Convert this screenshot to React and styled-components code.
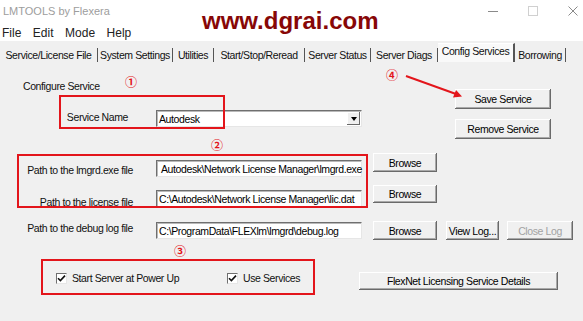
import React from 'react'
import styled, { createGlobalStyle } from 'styled-components'

const UI_FONT = '"Liberation Sans", Arial, sans-serif'
const RED = '#e3151b'

const GlobalStyle = createGlobalStyle`
  html, body {
    margin: 0;
    padding: 0;
    background: #f0f0f0;
  }
  body {
    font-family: ${UI_FONT};
  }
  * {
    box-sizing: border-box;
  }
`

const Window = styled.div`
  position: relative;
  width: 583px;
  height: 321px;
  overflow: hidden;
  background: #f0f0f0;
  display: flex;
  flex-direction: column;
  font-family: ${UI_FONT};
  font-size: 10.5px;
  letter-spacing: -0.4px;
  color: #111;
`

const TitleBar = styled.div`
  height: 22px;
  flex: none;
  background: #fff;
  display: flex;
  align-items: center;
  padding: 0 5px 0 3px;
`

const TitleText = styled.div`
  font-size: 11px;
  letter-spacing: 0;
  color: #9d9d9d;
`

const Controls = styled.div`
  margin-left: auto;
  display: flex;
  align-items: center;
  gap: 30px;
`

const Watermark = styled.div`
  position: absolute;
  left: 202px;
  top: 9px;
  font-family: "Liberation Sans", Arial, sans-serif;
  font-weight: bold;
  font-size: 24px;
  line-height: 24px;
  letter-spacing: 0;
  color: #870707;
`

const MenuBar = styled.div`
  height: 19px;
  flex: none;
  background: #fff;
  display: flex;
  align-items: center;
  gap: 11.5px;
  padding: 3px 0 0 2px;
  font-size: 12px;
  letter-spacing: 0;
  color: #222;
`

const TabStrip = styled.div`
  height: 21px;
  flex: none;
  display: flex;
  align-items: flex-end;
`

const Tab = styled.div`
  width: ${p => p.$w}px;
  height: ${p => (p.$active ? 19 : 14)}px;
  display: flex;
  align-items: center;
  justify-content: center;
  padding-bottom: ${p => (p.$active ? 4 : 0)}px;
  white-space: nowrap;
  background: ${p => (p.$active ? '#f9f9f9' : 'transparent')};
  border-right: ${p => (p.$active ? 2 : 1)}px solid #555;
  border-top: ${p => (p.$active ? '1px solid #fff' : 'none')};
`

const Panel = styled.div`
  display: flex;
  flex-direction: column;
`

const TopSection = styled.div`
  height: 91px;
  display: flex;
`

const TopLeft = styled.div`
  width: 455px;
  display: flex;
  flex-direction: column;
  padding-top: 18px;
`

const SectionTitle = styled.div`
  padding-left: 23px;
  line-height: 12px;
  height: 12px;
  margin-bottom: 18px;
`

const SideButtons = styled.div`
  display: flex;
  flex-direction: column;
  gap: 10px;
  padding-top: 27px;
`

const FieldRow = styled.div`
  display: flex;
  align-items: flex-start;
  height: ${p => p.$h}px;
  flex: none;
`

const FieldLabel = styled.div`
  width: ${p => p.$w}px;
  flex: none;
  text-align: right;
  line-height: 12px;
  margin-top: ${p => p.$top || 0}px;
  white-space: nowrap;
`

const TextBox = styled.div`
  position: relative;
  flex: none;
  width: 206px;
  height: 17px;
  margin-left: ${p => p.$left}px;
  margin-top: ${p => p.$top || 0}px;
  background: #fff;
  border: 1px solid;
  border-color: #6f6f6f #e6e6e6 #e6e6e6 #6f6f6f;
  box-shadow: inset 1px 1px #b9b9b9;
  padding: 0 3px 0 ${p => p.$indent || 2}px;
  display: flex;
  align-items: center;
  white-space: nowrap;
  color: #000;
`

const DropButton = styled.div`
  position: absolute;
  right: 1px;
  top: 1px;
  width: 13px;
  height: 13px;
  background: #f0f0f0;
  box-shadow: inset -1px -1px #6a6a6a, inset 1px 1px #fff;
  display: flex;
  align-items: center;
  justify-content: center;
`

const Arrow = styled.div`
  width: 0;
  height: 0;
  border-left: 3.5px solid transparent;
  border-right: 3.5px solid transparent;
  border-top: 4px solid #000;
`

const Button = styled.div`
  flex: none;
  width: ${p => p.$w}px;
  height: ${p => p.$h || 20}px;
  margin-left: ${p => p.$left || 0}px;
  margin-top: ${p => p.$top || 0}px;
  background: #f0f0f0;
  box-shadow: inset -1px -1px #6a6a6a, inset 1px 1px #fff,
    inset -2px -2px #a9a9a9;
  display: flex;
  align-items: center;
  justify-content: center;
  white-space: nowrap;
  color: ${p => (p.$disabled ? '#a3a3a3' : '#000')};
`

const BottomRow = styled.div`
  display: flex;
  align-items: flex-start;
  margin-top: 31px;
`

const CheckGroup = styled.div`
  width: 359px;
  display: flex;
  padding-left: 56px;
  padding-top: 1px;
`

const CheckItem = styled.label`
  display: flex;
  align-items: center;
  gap: 5px;
  width: ${p => p.$w}px;
  line-height: 11px;
`

const CheckBox = styled.span`
  width: 11px;
  height: 11px;
  flex: none;
  background: #fff;
  border: 1px solid;
  border-color: #6f6f6f #e6e6e6 #e6e6e6 #6f6f6f;
  display: flex;
  align-items: center;
  justify-content: center;
`

const RedBox = styled.div`
  position: absolute;
  left: ${p => p.$x}px;
  top: ${p => p.$y}px;
  width: ${p => p.$w}px;
  height: ${p => p.$h}px;
  border: 2px solid ${RED};
  pointer-events: none;
`

const Marker = styled.div`
  position: absolute;
  left: ${p => p.$x}px;
  top: ${p => p.$y}px;
  font-family: "Noto Sans CJK SC", "DejaVu Sans", sans-serif;
  font-size: 12px;
  line-height: 12px;
  letter-spacing: 0;
  font-weight: bold;
  color: ${RED};
`

const Pointer = styled.svg`
  position: absolute;
  left: 400px;
  top: 70px;
`

const tabs = [
  ['Service/License File', 98],
  ['System Settings', 75],
  ['Utilities', 41],
  ['Start/Stop/Reread', 91],
  ['Server Status', 66],
  ['Server Diags', 67],
  ['Config Services', 77],
  ['Borrowing', 51],
]

function Check() {
  return (
    <svg width="9" height="9" viewBox="0 0 9 9">
      <path d="M1 4.2 L3.4 6.6 L8 1.6" fill="none" stroke="#111" strokeWidth="1.6" />
    </svg>
  )
}

export default function App() {
  return (
    <>
      <GlobalStyle />
      <Window>
        <TitleBar>
          <TitleText>LMTOOLS by Flexera</TitleText>
          <Controls>
            <svg width="10" height="10" viewBox="0 0 10 10">
              <path d="M0 5.5 H10" stroke="#8a8a8a" strokeWidth="1" />
            </svg>
            <svg width="10" height="10" viewBox="0 0 10 10">
              <rect x="0.5" y="0.5" width="9" height="9" fill="none" stroke="#d0d0d0" />
            </svg>
            <svg width="10" height="10" viewBox="0 0 10 10">
              <path d="M0.5 0.5 L9.5 9.5 M9.5 0.5 L0.5 9.5" stroke="#8a8a8a" strokeWidth="1" />
            </svg>
          </Controls>
        </TitleBar>
        <MenuBar>
          <span>File</span>
          <span>Edit</span>
          <span>Mode</span>
          <span>Help</span>
        </MenuBar>
        <TabStrip>
          {tabs.map(([name, w]) => (
            <Tab key={name} $w={w} $active={name === 'Config Services'}>
              {name}
            </Tab>
          ))}
        </TabStrip>

        <Panel>
          <TopSection>
            <TopLeft>
              <SectionTitle>Configure Service</SectionTitle>
              <FieldRow $h={17}>
                <FieldLabel $w={128} $top={1}>Service Name</FieldLabel>
                <TextBox $left={28}>
                  Autodesk
                  <DropButton>
                    <Arrow />
                  </DropButton>
                </TextBox>
              </FieldRow>
            </TopLeft>
            <SideButtons>
              <Button $w={96}>Save Service</Button>
              <Button $w={96}>Remove Service</Button>
            </SideButtons>
          </TopSection>

          <FieldRow $h={32}>
            <FieldLabel $w={133} $top={11}>Path to the lmgrd.exe file</FieldLabel>
            <TextBox $left={23} $top={7} $indent={4}>
              Autodesk\Network License Manager\lmgrd.exe
            </TextBox>
            <Button $w={64} $h={19} $left={11}>Browse</Button>
          </FieldRow>
          <FieldRow $h={36}>
            <FieldLabel $w={133} $top={11}>Path to the license file</FieldLabel>
            <TextBox $left={23} $top={5}>
              C:\Autodesk\Network License Manager\lic.dat
            </TextBox>
            <Button $w={64} $h={18} $left={11}>Browse</Button>
          </FieldRow>
          <FieldRow $h={20}>
            <FieldLabel $w={133} $top={1}>Path to the debug log file</FieldLabel>
            <TextBox $left={23} $top={1}>
              C:\ProgramData\FLEXlm\lmgrd\debug.log
            </TextBox>
            <Button $w={64} $h={19} $left={11}>Browse</Button>
            <Button $w={53} $h={19} $left={9}>View Log...</Button>
            <Button $w={66} $h={19} $left={8} $disabled>Close Log</Button>
          </FieldRow>

          <BottomRow>
            <CheckGroup>
              <CheckItem $w={171}>
                <CheckBox><Check /></CheckBox>
                Start Server at Power Up
              </CheckItem>
              <CheckItem $w={100}>
                <CheckBox><Check /></CheckBox>
                Use Services
              </CheckItem>
            </CheckGroup>
            <Button $w={199} $h={18}>FlexNet Licensing Service Details</Button>
          </BottomRow>
        </Panel>

        <Watermark>www.dgrai.com</Watermark>

        <RedBox $x={59} $y={95} $w={166} $h={34} />
        <RedBox $x={17} $y={154} $w={351} $h={54} />
        <RedBox $x={41} $y={259} $w={274} $h={36} />

        <Marker $x={125} $y={76}>①</Marker>
        <Marker $x={211} $y={139}>②</Marker>
        <Marker $x={174} $y={245}>③</Marker>
        <Marker $x={386} $y={69}>④</Marker>

        <Pointer width="66" height="32" viewBox="0 0 66 32">
          <path d="M6 6 L56 24" stroke={RED} strokeWidth="2" />
          <path d="M62 26.5 L53 27.5 L56 20 Z" fill={RED} />
        </Pointer>
      </Window>
    </>
  )
}
